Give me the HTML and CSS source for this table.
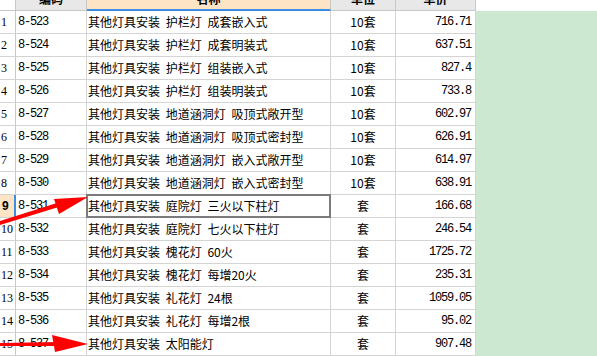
FILE: index.html
```html
<!DOCTYPE html>
<html lang="zh">
<head>
<meta charset="utf-8">
<link rel="stylesheet" href="styles.css">
</head>
<body>
<div class="sheet">
  <div class="grid">
    <div class="c hd rn"></div><div class="c hd">编码</div><div class="c hd hd-sel">名称</div><div class="c hd">单位</div><div class="c hd">单价</div><div class="c blank"></div>

    <div class="c rn">1</div><div class="c code">8-523</div><div class="c name">其他灯具安装 护栏灯 成套嵌入式</div><div class="c unit">10套</div><div class="c price">716.71</div><div class="c fill"></div>
    <div class="c rn">2</div><div class="c code">8-524</div><div class="c name">其他灯具安装 护栏灯 成套明装式</div><div class="c unit">10套</div><div class="c price">637.51</div><div class="c fill"></div>
    <div class="c rn">3</div><div class="c code">8-525</div><div class="c name">其他灯具安装 护栏灯 组装嵌入式</div><div class="c unit">10套</div><div class="c price">827.4</div><div class="c fill"></div>
    <div class="c rn">4</div><div class="c code">8-526</div><div class="c name">其他灯具安装 护栏灯 组装明装式</div><div class="c unit">10套</div><div class="c price">733.8</div><div class="c fill"></div>
    <div class="c rn">5</div><div class="c code">8-527</div><div class="c name">其他灯具安装 地道涵洞灯 吸顶式敞开型</div><div class="c unit">10套</div><div class="c price">602.97</div><div class="c fill"></div>
    <div class="c rn">6</div><div class="c code">8-528</div><div class="c name">其他灯具安装 地道涵洞灯 吸顶式密封型</div><div class="c unit">10套</div><div class="c price">626.91</div><div class="c fill"></div>
    <div class="c rn">7</div><div class="c code">8-529</div><div class="c name">其他灯具安装 地道涵洞灯 嵌入式敞开型</div><div class="c unit">10套</div><div class="c price">614.97</div><div class="c fill"></div>
    <div class="c rn">8</div><div class="c code">8-530</div><div class="c name">其他灯具安装 地道涵洞灯 嵌入式密封型</div><div class="c unit">10套</div><div class="c price">638.91</div><div class="c fill"></div>
    <div class="c rn rn-sel">9</div><div class="c code">8-531</div><div class="c name selected">其他灯具安装 庭院灯 三火以下柱灯</div><div class="c unit">套</div><div class="c price">166.68</div><div class="c fill"></div>
    <div class="c rn">10</div><div class="c code">8-532</div><div class="c name">其他灯具安装 庭院灯 七火以下柱灯</div><div class="c unit">套</div><div class="c price">246.54</div><div class="c fill"></div>
    <div class="c rn">11</div><div class="c code">8-533</div><div class="c name">其他灯具安装 槐花灯 60火</div><div class="c unit">套</div><div class="c price">1725.72</div><div class="c fill"></div>
    <div class="c rn">12</div><div class="c code">8-534</div><div class="c name">其他灯具安装 槐花灯 每增20火</div><div class="c unit">套</div><div class="c price">235.31</div><div class="c fill"></div>
    <div class="c rn">13</div><div class="c code">8-535</div><div class="c name">其他灯具安装 礼花灯 24根</div><div class="c unit">套</div><div class="c price">1059.05</div><div class="c fill"></div>
    <div class="c rn">14</div><div class="c code">8-536</div><div class="c name">其他灯具安装 礼花灯 每增2根</div><div class="c unit">套</div><div class="c price">95.02</div><div class="c fill"></div>
    <div class="c rn">15</div><div class="c code">8-537</div><div class="c name">其他灯具安装 太阳能灯</div><div class="c unit">套</div><div class="c price">907.48</div><div class="c fill"></div>
  </div>
  <svg class="arrows" width="597" height="356" viewBox="0 0 597 356">
    <polygon points="0,221 0,225 62,206 60,202" fill="#ff0000"/>
    <polygon points="88,197 54,199 59,214" fill="#ff0000"/>
    <polygon points="0,343 0,346 58,346 58,342" fill="#ff0000"/>
    <polygon points="88,344 52,335 55,352" fill="#ff0000"/>
  </svg>
</div>
</body>
</html>
```

FILE: styles.css
```css
html, body {
  margin: 0;
  padding: 0;
  background: #ffffff;
  overflow: hidden;
}

.sheet {
  position: relative;
  width: 597px;
  height: 356px;
  overflow: hidden;
}

.grid {
  display: grid;
  grid-template-columns: 16px 71px 244px 65px 80px 1fr;
  grid-auto-rows: 23px;
  margin-top: -12px;
  font-family: "Noto Sans CJK SC", sans-serif;
  font-size: 12px;
  color: #000;
}

.c {
  box-sizing: border-box;
  border-right: 1px solid #d4d4d4;
  border-bottom: 1px solid #d4d4d4;
  display: flex;
  align-items: center;
  white-space: nowrap;
  overflow: hidden;
  line-height: 1;
}

.hd {
  background: #e8e8e8;
  justify-content: center;
  font-weight: bold;
  border-bottom-color: #c8c8c8;
  border-right-color: #c8c8c8;
}

.hd-sel {
  background: #fde4c4;
  border-bottom: 2px solid #3c8fe0;
}

.blank {
  border: none;
  background: #ffffff;
}

.fill {
  border: none;
  background: #cde8d0;
}

.rn {
  font-family: "Liberation Serif", serif;
  font-size: 12px;
  padding-left: 1px;
  border-right-color: #c8c8c8;
  background: #ffffff;
}

.rn-sel {
  background: #fde4c4;
  border-right: 2px solid #3c8fe0;
  font-weight: bold;
  font-family: "Liberation Sans", sans-serif;
  padding-left: 2px;
}

.code {
  font-family: "Liberation Mono", monospace;
  font-size: 12px;
  letter-spacing: -1.2px;
  padding-left: 2px;
}

.name {
  padding-left: 1px;
  position: relative;
  overflow: visible;
  word-spacing: 3px;
}

.unit {
  justify-content: center;
}

.price {
  justify-content: flex-end;
  padding-right: 4px;
  font-family: "Liberation Mono", monospace;
  font-size: 12px;
  letter-spacing: -1.2px;
}

.selected::after {
  content: "";
  position: absolute;
  left: -1px;
  top: -1px;
  right: -1px;
  bottom: -1px;
  border: 2px solid #7c7c7c;
}

.arrows {
  position: absolute;
  left: 0;
  top: 0;
  pointer-events: none;
}
```
